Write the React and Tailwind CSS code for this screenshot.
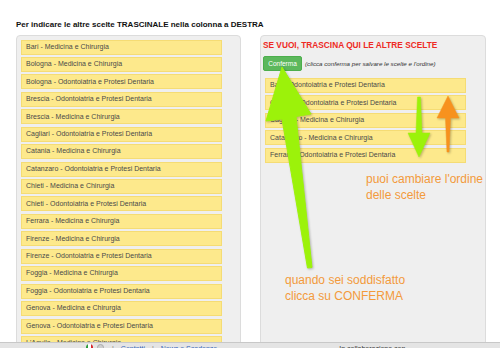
import React from 'react';

const leftItems = [
  'Bari - Medicina e Chirurgia',
  'Bologna - Medicina e Chirurgia',
  'Bologna - Odontoiatria e Protesi Dentaria',
  'Brescia - Odontoiatria e Protesi Dentaria',
  'Brescia - Medicina e Chirurgia',
  'Cagliari - Odontoiatria e Protesi Dentaria',
  'Catania - Medicina e Chirurgia',
  'Catanzaro - Odontoiatria e Protesi Dentaria',
  'Chieti - Medicina e Chirurgia',
  'Chieti - Odontoiatria e Protesi Dentaria',
  'Ferrara - Medicina e Chirurgia',
  'Firenze - Medicina e Chirurgia',
  'Firenze - Odontoiatria e Protesi Dentaria',
  'Foggia - Medicina e Chirurgia',
  'Foggia - Odontoiatria e Protesi Dentaria',
  'Genova - Medicina e Chirurgia',
  'Genova - Odontoiatria e Protesi Dentaria',
  "L'Aquila - Medicina e Chirurgia",
];

const rightItems = [
  'Bari - Odontoiatria e Protesi Dentaria',
  'Catania - Odontoiatria e Protesi Dentaria',
  'Cagliari - Medicina e Chirurgia',
  'Catanzaro - Medicina e Chirurgia',
  'Ferrara - Odontoiatria e Protesi Dentaria',
];

const Item = ({ label }) => (
  <div className="h-[15px] w-[201px] shrink-0 flex items-center pl-[4px] bg-[#fde98c] border border-[#f5dc74] text-[7px] text-[#4a4a4a] whitespace-nowrap">
    {label}
  </div>
);

const Arrows = () => (
  <svg
    className="absolute inset-0 pointer-events-none drop-shadow-[1px_1px_1px_rgba(0,0,0,0.25)]"
    width="500"
    height="348"
    viewBox="0 0 500 348"
  >
    {/* freccia grande verde verso Conferma */}
    <polygon
      points="282,67 311,114 296,116.5 312,267.5 307.5,268 282,119 266,121"
      fill="#9cf20a"
      stroke="#9cf20a"
      strokeWidth="1"
      strokeLinejoin="round"
    />
    {/* freccia verde in giu */}
    <polygon
      points="417.5,97 420.5,97 422,133 430,133 419,157 408,133 416,133"
      fill="#9cf20a"
      stroke="#9cf20a"
      strokeWidth="0.5"
      strokeLinejoin="round"
    />
    {/* freccia arancio in su */}
    <polygon
      points="448,96 459,118 450.5,118 449,152 447,152 445.5,118 437,118"
      fill="#f7921e"
      stroke="#f7921e"
      strokeWidth="0.5"
      strokeLinejoin="round"
    />
  </svg>
);

const App = () => {
  return (
    <div className="relative w-[500px] h-[348px] overflow-hidden bg-white font-['Liberation_Sans',Arial,sans-serif]">
      {/* Titolo */}
      <div className="pt-[19px] pl-[16px] h-[35px] text-[8px] font-bold text-[#111] whitespace-nowrap">
        Per indicare le altre scelte TRASCINALE nella colonna a DESTRA
      </div>

      <div className="flex pl-[16px] gap-[19px]">
        {/* Colonna sinistra */}
        <div className="w-[225px] h-[330px] shrink-0 bg-[#efefef] border border-[#dcdcdc] rounded-[4px] pt-[3.5px] pl-[4px] flex flex-col gap-[2.44px]">
          {leftItems.map((l) => (
            <Item key={l} label={l} />
          ))}
        </div>

        {/* Colonna destra */}
        <div className="w-[226px] h-[330px] shrink-0 bg-[#efefef] border border-[#dcdcdc] rounded-[4px] pl-[2px]">
          <div className="pt-[4px] text-[8.3px] font-bold text-[#ee2a24] whitespace-nowrap leading-[10px]">
            SE VUOI, TRASCINA QUI LE ALTRE SCELTE
          </div>
          <div className="flex items-center mt-[6px]">
            <div className="w-[39px] h-[15px] flex items-center justify-center bg-[#5cb85c] border border-[#4cae4c] rounded-[2px] text-[6.5px] text-white">
              Conferma
            </div>
            <span className="ml-[3px] text-[6.2px] italic text-[#333] whitespace-nowrap">
              (clicca conferma per salvare le scelte e l'ordine)
            </span>
          </div>
          <div className="mt-[7px] pl-[2px] flex flex-col gap-[2.44px]">
            {rightItems.map((l) => (
              <Item key={l} label={l} />
            ))}
          </div>
          <div className="mt-[8px] ml-[103px] text-[12px] leading-[16px] text-[#f39a3b] whitespace-nowrap">
            puoi cambiare l'ordine
            <br />
            delle scelte
          </div>
          <div className="mt-[69px] ml-[22px] text-[12px] leading-[16px] text-[#f39a3b] whitespace-nowrap">
            quando sei soddisfatto
            <br />
            clicca su CONFERMA
          </div>
        </div>
      </div>

      <Arrows />

      {/* Barra in basso */}
      <div className="absolute left-0 top-[342px] w-[500px] h-[20px] bg-[#e4e4e4] border-t border-[#c8c8c8] flex items-start pt-[1px] text-[7px] text-[#333] whitespace-nowrap">
        <div className="ml-[86px] flex items-center gap-[4px]">
          <span className="w-[7px] h-[7px] rounded-full overflow-hidden flex">
            <span className="w-1/3 bg-[#2a9d3a]" />
            <span className="w-1/3 bg-white" />
            <span className="w-1/3 bg-[#d8262c]" />
          </span>
          <span className="w-[7px] h-[7px] rounded-full bg-[#cfcfcf] border border-[#aaa]" />
        </div>
        <span className="ml-[8px] text-[#777]">|</span>
        <span className="ml-[7px] text-[#3366bb] underline">Contatti</span>
        <span className="ml-[7px] text-[#777]">|</span>
        <span className="ml-[7px] text-[#3366bb] underline">News e Scadenze</span>
        <span className="ml-[122px]">In collaborazione con</span>
      </div>
    </div>
  );
};

export default App;
